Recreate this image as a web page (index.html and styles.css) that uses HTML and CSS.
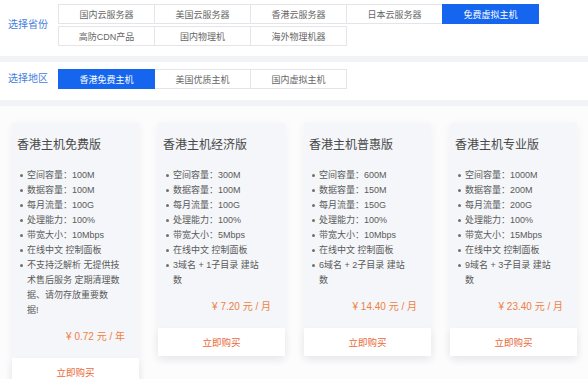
FILE: index.html
```html
<!DOCTYPE html>
<html lang="zh-CN">
<head>
<meta charset="utf-8">
<title>虚拟主机</title>
<link rel="stylesheet" href="styles.css">
</head>
<body>
<div class="filter filter-top">
  <div class="label">选择省份</div>
  <div class="tabs">
    <div class="tab">国内云服务器</div>
    <div class="tab">美国云服务器</div>
    <div class="tab">香港云服务器</div>
    <div class="tab">日本云服务器</div>
    <div class="tab active">免费虚拟主机</div>
    <div class="tab">高防CDN产品</div>
    <div class="tab">国内物理机</div>
    <div class="tab">海外物理机器</div>
  </div>
</div>
<div class="band"></div>
<div class="filter filter-area">
  <div class="label">选择地区</div>
  <div class="tabs">
    <div class="tab active">香港免费主机</div>
    <div class="tab">美国优质主机</div>
    <div class="tab">国内虚拟主机</div>
  </div>
</div>
<div class="band"></div>
<div class="cards">
  <div class="card">
    <div class="card-body">
      <div class="card-title">香港主机免费版</div>
      <ul class="specs">
        <li>空间容量：100M</li>
        <li>数据容量：100M</li>
        <li>每月流量：100G</li>
        <li>处理能力：100%</li>
        <li>带宽大小：10Mbps</li>
        <li>在线中文 控制面板</li>
        <li>不支持泛解析 无提供技<br>术售后服务 定期清理数<br>据、请勿存放重要数<br>据!</li>
      </ul>
      <div class="price">¥ 0.72 元 / 年</div>
    </div>
    <div class="buy">立即购买</div>
  </div>
  <div class="card">
    <div class="card-body">
      <div class="card-title">香港主机经济版</div>
      <ul class="specs">
        <li>空间容量：300M</li>
        <li>数据容量：100M</li>
        <li>每月流量：100G</li>
        <li>处理能力：100%</li>
        <li>带宽大小：5Mbps</li>
        <li>在线中文 控制面板</li>
        <li>3域名 + 1子目录 建站<br>数</li>
      </ul>
      <div class="price">¥ 7.20 元 / 月</div>
    </div>
    <div class="buy">立即购买</div>
  </div>
  <div class="card">
    <div class="card-body">
      <div class="card-title">香港主机普惠版</div>
      <ul class="specs">
        <li>空间容量：600M</li>
        <li>数据容量：150M</li>
        <li>每月流量：150G</li>
        <li>处理能力：100%</li>
        <li>带宽大小：10Mbps</li>
        <li>在线中文 控制面板</li>
        <li>6域名 + 2子目录 建站<br>数</li>
      </ul>
      <div class="price">¥ 14.40 元 / 月</div>
    </div>
    <div class="buy">立即购买</div>
  </div>
  <div class="card">
    <div class="card-body">
      <div class="card-title">香港主机专业版</div>
      <ul class="specs">
        <li>空间容量：1000M</li>
        <li>数据容量：200M</li>
        <li>每月流量：200G</li>
        <li>处理能力：100%</li>
        <li>带宽大小：15Mbps</li>
        <li>在线中文 控制面板</li>
        <li>9域名 + 3子目录 建站<br>数</li>
      </ul>
      <div class="price">¥ 23.40 元 / 月</div>
    </div>
    <div class="buy">立即购买</div>
  </div>
</div>
</body>
</html>
```
FILE: styles.css
```css
* { box-sizing: border-box; }
html, body { margin: 0; padding: 0; }
body {
  width: 588px;
  height: 379px;
  overflow: hidden;
  background: #fcfcfd;
  font-family: "Liberation Sans", "Noto Sans CJK SC", sans-serif;
  color: #444;
}
.filter {
  display: flex;
  align-items: center;
  background: #ffffff;
  padding-left: 8px;
}
.filter-top { height: 56px; padding-top: 4px; padding-bottom: 10px; }
.filter-area { height: 38px; padding-top: 7px; padding-bottom: 11px; }
.label {
  width: 50px;
  font-size: 10px;
  color: #4580dc;
  line-height: 14px;
}
.tabs {
  display: grid;
  grid-template-columns: repeat(5, 96px);
  row-gap: 2px;
  align-self: flex-start;
}
.tab {
  height: 20px;
  margin-right: -1px;
  border: 1px solid #e3e5e8;
  background: #ffffff;
  font-size: 9px;
  color: #666;
  display: flex;
  align-items: center;
  justify-content: center;
  position: relative;
}
.tab.active {
  background: #1565ef;
  border-color: #1565ef;
  color: #ffffff;
  z-index: 1;
}
.band { height: 6px; background: #f1f3f6; }
.cards {
  display: flex;
  align-items: flex-start;
  gap: 19px;
  padding: 17px 0 0 12px;
}
.card {
  width: 127px;
  flex: none;
  box-shadow: 0 2px 10px rgba(30, 40, 60, 0.05);
}
.card-body {
  background: #f4f6f9;
  padding: 14px 14px 14px 5px;
}
.card-title {
  font-size: 12px;
  line-height: 16px;
  color: #484848;
  margin-bottom: 15px;
}
.specs {
  list-style: none;
  margin: 0;
  padding: 0 0 0 10px;
}
.specs li {
  position: relative;
  font-size: 9px;
  line-height: 15px;
  color: #5a5a5a;
  white-space: nowrap;
}
.specs li::before {
  content: "";
  position: absolute;
  left: -7px;
  top: 6px;
  width: 3px;
  height: 3px;
  border-radius: 50%;
  background: #707070;
}
.price {
  margin-top: 12px;
  text-align: right;
  font-size: 10px;
  line-height: 14px;
  color: #f07f42;
}
.buy {
  height: 28px;
  background: #ffffff;
  display: flex;
  align-items: center;
  justify-content: center;
  font-size: 9.5px;
  color: #e8693a;
  box-shadow: 0 4px 8px rgba(30, 40, 60, 0.06);
}
```
